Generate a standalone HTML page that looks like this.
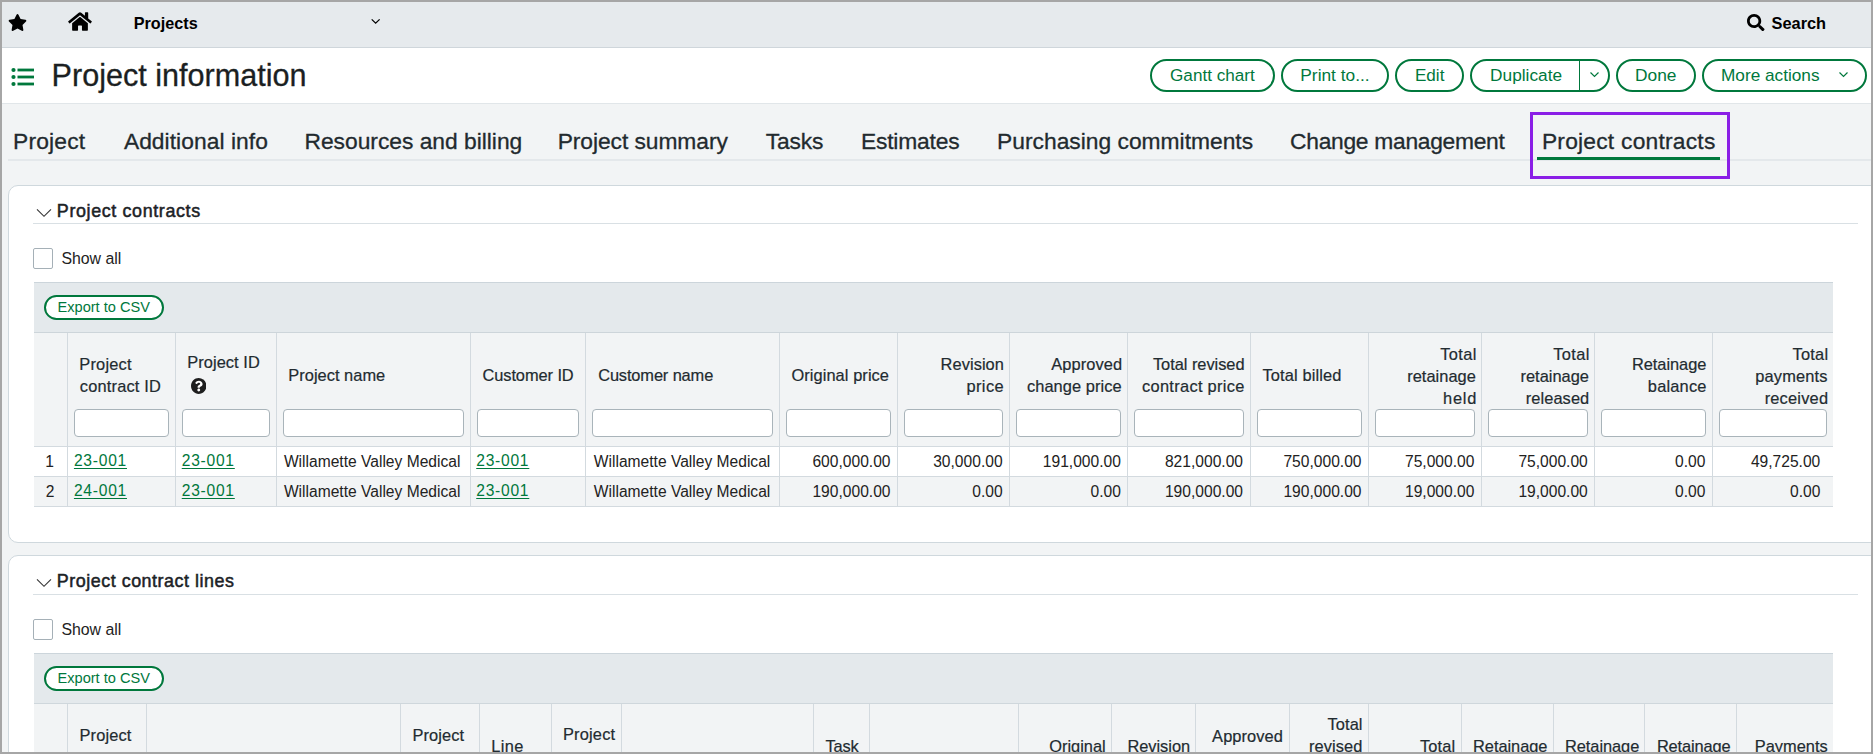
<!DOCTYPE html><html><head><meta charset="utf-8"><title>Project information</title><style>
*{box-sizing:border-box;margin:0;padding:0}
html,body{width:1873px;height:754px;overflow:hidden;background:#f2f4f5}
body{position:relative;font-family:"Liberation Sans",sans-serif;color:#222b30}
.abs{position:absolute}
.t{position:absolute;white-space:nowrap;line-height:1}
.btn{position:absolute;border:2px solid #00783c;border-radius:17px;background:#fff}
.inp{position:absolute;height:28px;background:#fff;border:1px solid #a9b4ba;border-radius:4px}
.vl{position:absolute;width:1px;background:#d3dadf}
.hl{position:absolute;height:1px;background:#d3dadf}
.hd{color:#222b30;-webkit-text-stroke:0.2px #222b30}
.cell{color:#222}
.lnk{color:#00783c;text-decoration:underline;text-underline-offset:1.5px;text-decoration-thickness:1px}
</style></head><body>
<div class="abs" style="left:0;top:0;width:1873px;height:48px;background:#e6eaed;border-bottom:1px solid #cfd6db"></div>
<svg class="abs" style="left:8px;top:14px" width="19" height="17" viewBox="0 0 576 512"><path fill="#000" d="M259.3 17.8L194 150.2 47.9 171.5c-26.2 3.8-36.7 36.1-17.7 54.6l105.7 103-25 145.5c-4.5 26.3 23.2 46 46.4 33.7L288 439.6l130.7 68.7c23.2 12.2 50.9-7.4 46.4-33.7l-25-145.5 105.7-103c19-18.5 8.5-50.8-17.7-54.6L382 150.2 316.7 17.8c-11.7-23.6-45.6-23.9-57.4 0z"/></svg>
<svg class="abs" style="left:68px;top:11px" width="24" height="21" viewBox="0 0 576 512"><path fill="#000" d="M280.37 148.26L96 300.11V464a16 16 0 0 0 16 16l112.06-.29a16 16 0 0 0 15.92-16V368a16 16 0 0 1 16-16h64a16 16 0 0 1 16 16v95.64a16 16 0 0 0 16 16.05L464 480a16 16 0 0 0 16-16V300L295.67 148.26a12.19 12.19 0 0 0-15.3 0zM571.6 251.47L488 182.56V44.05a12 12 0 0 0-12-12h-56a12 12 0 0 0-12 12v72.61L318.47 43a48 48 0 0 0-61 0L4.34 251.47a12 12 0 0 0-1.6 16.9l25.5 31A12 12 0 0 0 45.15 301l235.22-193.74a12.19 12.19 0 0 1 15.3 0L530.9 301a12 12 0 0 0 16.9-1.6l25.5-31a12 12 0 0 0-1.7-16.93z"/></svg>
<div class="t " style="left:133.75px;top:15.00px;font-size:16.20px;font-weight:bold;color:#000;">Projects</div>
<svg class="abs" style="left:370px;top:17px" width="12" height="8" viewBox="0 0 12 8"><path d="M1.7 2.4 L5.65 6.1 L9.6 2.4" fill="none" stroke="#000" stroke-width="1.3"/></svg>
<svg class="abs" style="left:1747px;top:14px" width="17.5" height="17.2" viewBox="0 0 512 512" preserveAspectRatio="none"><path fill="#000" d="M505 442.7L405.3 343c-4.5-4.5-10.6-7-17-7H372c27.6-35.3 44-79.7 44-128C416 93.1 322.9 0 208 0S0 93.1 0 208s93.1 208 208 208c48.3 0 92.7-16.4 128-44v16.3c0 6.4 2.5 12.5 7 17l99.7 99.7c9.4 9.4 24.6 9.4 33.9 0l28.3-28.3c9.4-9.4 9.4-24.6.1-34zM208 336c-70.7 0-128-57.2-128-128 0-70.7 57.2-128 128-128 70.7 0 128 57.2 128 128 0 70.7-57.2 128-128 128z"/></svg>
<div class="t " style="left:1771.51px;top:15.00px;font-size:16.39px;font-weight:bold;color:#000;">Search</div>
<div class="abs" style="left:0;top:48px;width:1873px;height:56px;background:#fff;border-bottom:1px solid #e1e6e9"></div>
<svg class="abs" style="left:11px;top:67px" width="24" height="20" viewBox="0 0 24 20"><circle cx="2.5" cy="3" r="2.1" fill="#00783c"/><circle cx="2.5" cy="10" r="2.1" fill="#00783c"/><circle cx="2.5" cy="17" r="2.1" fill="#00783c"/><rect x="6.5" y="1.6" width="16.5" height="2.8" fill="#00783c"/><rect x="6.5" y="8.6" width="16.5" height="2.8" fill="#00783c"/><rect x="6.5" y="15.6" width="16.5" height="2.8" fill="#00783c"/></svg>
<div class="t " style="left:51.55px;top:60.00px;font-size:30.59px;color:#1b1f22;-webkit-text-stroke:0.3px #1b1f22;">Project information</div>
<div class="btn" style="left:1150px;top:59px;width:125px;height:33px"></div>
<div class="t " style="left:1170.04px;top:67.00px;font-size:17.14px;color:#00783c;">Gantt chart</div>
<div class="btn" style="left:1281px;top:59px;width:108px;height:33px"></div>
<div class="t " style="left:1300.31px;top:67.00px;font-size:17.34px;color:#00783c;">Print to...</div>
<div class="btn" style="left:1395px;top:59px;width:69px;height:33px"></div>
<div class="t " style="left:1414.93px;top:67.00px;font-size:17.13px;color:#00783c;">Edit</div>
<div class="btn" style="left:1470px;top:59px;width:140px;height:33px"></div>
<div class="t " style="left:1490.12px;top:67.00px;font-size:17.28px;color:#00783c;">Duplicate</div>
<div class="btn" style="left:1616px;top:59px;width:80px;height:33px"></div>
<div class="t " style="left:1635.01px;top:67.00px;font-size:17.35px;color:#00783c;">Done</div>
<div class="btn" style="left:1702px;top:59px;width:165px;height:33px"></div>
<div class="t " style="left:1721.02px;top:67.00px;font-size:17.22px;color:#00783c;">More actions</div>
<div class="abs" style="left:1579px;top:59px;width:1.2px;height:33px;background:#00783c"></div>
<svg class="abs" style="left:1589px;top:70px" width="11" height="10" viewBox="0 0 11 10"><path d="M1.5 2.5 L5.5 6.5 L9.5 2.5" fill="none" stroke="#00783c" stroke-width="1.15"/></svg>
<svg class="abs" style="left:1837.5px;top:70px" width="11" height="10" viewBox="0 0 11 10"><path d="M1.5 2.5 L5.5 6.5 L9.5 2.5" fill="none" stroke="#00783c" stroke-width="1.15"/></svg>
<div class="abs" style="left:8px;top:159px;width:1865px;height:2px;background:#e4e8eb"></div>
<div class="t " style="left:13.08px;top:130.00px;font-size:22.80px;color:#222a2e;-webkit-text-stroke:0.3px #222a2e;letter-spacing:0.188px;">Project</div>
<div class="t " style="left:123.89px;top:130.00px;font-size:22.80px;color:#222a2e;-webkit-text-stroke:0.3px #222a2e;letter-spacing:0.053px;">Additional info</div>
<div class="t " style="left:304.48px;top:130.00px;font-size:22.80px;color:#222a2e;-webkit-text-stroke:0.3px #222a2e;letter-spacing:-0.008px;">Resources and billing</div>
<div class="t " style="left:557.68px;top:130.00px;font-size:22.80px;color:#222a2e;-webkit-text-stroke:0.3px #222a2e;letter-spacing:-0.062px;">Project summary</div>
<div class="t " style="left:765.83px;top:130.00px;font-size:22.80px;color:#222a2e;-webkit-text-stroke:0.3px #222a2e;letter-spacing:-0.146px;">Tasks</div>
<div class="t " style="left:860.88px;top:130.00px;font-size:22.80px;color:#222a2e;-webkit-text-stroke:0.3px #222a2e;letter-spacing:-0.159px;">Estimates</div>
<div class="t " style="left:997.08px;top:130.00px;font-size:22.80px;color:#222a2e;-webkit-text-stroke:0.3px #222a2e;letter-spacing:0.004px;">Purchasing commitments</div>
<div class="t " style="left:1290.06px;top:130.00px;font-size:22.80px;color:#222a2e;-webkit-text-stroke:0.3px #222a2e;letter-spacing:-0.279px;">Change management</div>
<div class="t " style="left:1541.88px;top:130.00px;font-size:22.80px;color:#222a2e;-webkit-text-stroke:0.3px #222a2e;letter-spacing:0.230px;">Project contracts</div>
<div class="abs" style="left:1537px;top:157px;width:183px;height:3px;background:#00783c"></div>
<div class="abs" style="left:1530px;top:112px;width:200px;height:67px;border:3px solid #8a1ee6"></div>
<div class="abs" style="left:8px;top:185px;width:1880px;height:358px;background:#fff;border:1px solid #cfd8dd;border-radius:10px"></div>
<svg class="abs" style="left:36px;top:208px" width="16" height="10" viewBox="0 0 16 10"><path d="M1 1.3 L8 8.3 L15 1.3" fill="none" stroke="#383838" stroke-width="1.15"/></svg>
<div class="t " style="left:56.87px;top:203.00px;font-size:17.90px;color:#1c2226;-webkit-text-stroke:0.5px #1c2226;letter-spacing:0.625px;">Project contracts</div>
<div class="abs" style="left:33px;top:223px;width:1825px;height:1px;background:#d9e0e4"></div>
<div class="abs" style="left:33px;top:248px;width:20px;height:21px;border:1px solid #a5b0b7;border-radius:2px;background:#fff"></div>
<div class="t " style="left:61.39px;top:251.00px;font-size:15.89px;color:#222;">Show all</div>
<div class="abs" style="left:34px;top:282px;width:1799px;height:51px;background:#e4e9ec;border-top:1px solid #ccd5db;border-bottom:1px solid #cdd5da"></div>
<div class="abs" style="left:44px;top:295px;width:120px;height:25px;border:2px solid #00783c;border-radius:13px;background:#fff"></div>
<div class="t " style="left:57.53px;top:300.00px;font-size:14.58px;color:#00783c;">Export to CSV</div>
<div class="abs" style="left:34px;top:333px;width:1799px;height:113px;background:#f2f4f5"></div>
<div class="abs" style="left:34px;top:477px;width:1799px;height:29px;background:#f2f4f5"></div>
<div class="hl" style="left:34px;top:446px;width:1799px"></div>
<div class="hl" style="left:34px;top:476px;width:1799px"></div>
<div class="hl" style="left:34px;top:506px;width:1799px"></div>
<div class="vl" style="left:67px;top:333px;height:173px"></div>
<div class="vl" style="left:175px;top:333px;height:173px"></div>
<div class="vl" style="left:276px;top:333px;height:173px"></div>
<div class="vl" style="left:470px;top:333px;height:173px"></div>
<div class="vl" style="left:585px;top:333px;height:173px"></div>
<div class="vl" style="left:779px;top:333px;height:173px"></div>
<div class="vl" style="left:897px;top:333px;height:173px"></div>
<div class="vl" style="left:1009px;top:333px;height:173px"></div>
<div class="vl" style="left:1127px;top:333px;height:173px"></div>
<div class="vl" style="left:1250px;top:333px;height:173px"></div>
<div class="vl" style="left:1368px;top:333px;height:173px"></div>
<div class="vl" style="left:1481px;top:333px;height:173px"></div>
<div class="vl" style="left:1594px;top:333px;height:173px"></div>
<div class="vl" style="left:1712px;top:333px;height:173px"></div>
<div class="inp" style="left:74px;top:409px;width:95px"></div>
<div class="inp" style="left:182px;top:409px;width:88px"></div>
<div class="inp" style="left:283px;top:409px;width:181px"></div>
<div class="inp" style="left:477px;top:409px;width:102px"></div>
<div class="inp" style="left:592px;top:409px;width:181px"></div>
<div class="inp" style="left:786px;top:409px;width:105px"></div>
<div class="inp" style="left:904px;top:409px;width:99px"></div>
<div class="inp" style="left:1016px;top:409px;width:105px"></div>
<div class="inp" style="left:1134px;top:409px;width:110px"></div>
<div class="inp" style="left:1257px;top:409px;width:105px"></div>
<div class="inp" style="left:1375px;top:409px;width:100px"></div>
<div class="inp" style="left:1488px;top:409px;width:100px"></div>
<div class="inp" style="left:1601px;top:409px;width:105px"></div>
<div class="inp" style="left:1719px;top:409px;width:108px"></div>
<div class="t hd" style="left:79.29px;top:356.00px;font-size:16.40px;letter-spacing:0.198px;">Project</div>
<div class="t hd" style="left:79.86px;top:378.00px;font-size:16.40px;letter-spacing:0.178px;">contract ID</div>
<div class="t hd" style="left:187.29px;top:354.00px;font-size:16.40px;letter-spacing:0.062px;">Project ID</div>
<div class="t hd" style="left:288.29px;top:367.00px;font-size:16.40px;letter-spacing:0.032px;">Project name</div>
<div class="t hd" style="left:482.48px;top:367.00px;font-size:16.40px;letter-spacing:-0.075px;">Customer ID</div>
<div class="t hd" style="left:598.18px;top:367.00px;font-size:16.40px;letter-spacing:-0.127px;">Customer name</div>
<div class="t hd" style="left:791.46px;top:367.00px;font-size:16.40px;letter-spacing:0.075px;">Original price</div>
<div class="t hd" style="left:940.59px;top:356.00px;font-size:16.40px;letter-spacing:0.069px;">Revision</div>
<div class="t hd" style="left:966.43px;top:378.00px;font-size:16.40px;letter-spacing:0.424px;">price</div>
<div class="t hd" style="left:1051.22px;top:356.00px;font-size:16.40px;letter-spacing:0.094px;">Approved</div>
<div class="t hd" style="left:1026.96px;top:378.00px;font-size:16.40px;letter-spacing:0.081px;">change price</div>
<div class="t hd" style="left:1152.89px;top:356.00px;font-size:16.40px;letter-spacing:-0.026px;">Total revised</div>
<div class="t hd" style="left:1142.06px;top:378.00px;font-size:16.40px;letter-spacing:0.298px;">contract price</div>
<div class="t hd" style="left:1262.49px;top:367.00px;font-size:16.40px;letter-spacing:0.126px;">Total billed</div>
<div class="t hd" style="left:1440.29px;top:346.00px;font-size:16.40px;letter-spacing:0.343px;">Total</div>
<div class="t hd" style="left:1407.23px;top:368.00px;font-size:16.40px;letter-spacing:0.040px;">retainage</div>
<div class="t hd" style="left:1443.05px;top:390.00px;font-size:16.40px;letter-spacing:0.739px;">held</div>
<div class="t hd" style="left:1553.29px;top:346.00px;font-size:16.40px;letter-spacing:0.343px;">Total</div>
<div class="t hd" style="left:1520.53px;top:368.00px;font-size:16.40px;letter-spacing:0.002px;">retainage</div>
<div class="t hd" style="left:1525.73px;top:390.00px;font-size:16.40px;letter-spacing:0.091px;">released</div>
<div class="t hd" style="left:1631.89px;top:356.00px;font-size:16.40px;letter-spacing:-0.029px;">Retainage</div>
<div class="t hd" style="left:1647.83px;top:378.00px;font-size:16.40px;letter-spacing:0.201px;">balance</div>
<div class="t hd" style="left:1792.49px;top:346.00px;font-size:16.40px;letter-spacing:0.243px;">Total</div>
<div class="t hd" style="left:1755.23px;top:368.00px;font-size:16.40px;letter-spacing:0.178px;">payments</div>
<div class="t hd" style="left:1764.63px;top:390.00px;font-size:16.40px;letter-spacing:0.206px;">received</div>
<svg class="abs" style="left:190.8px;top:378px" width="15.5" height="15.9" viewBox="8 8 496 496" preserveAspectRatio="none"><path fill="#1e1e1e" d="M504 256c0 136.997-111.043 248-248 248S8 392.997 8 256C8 119.083 119.043 8 256 8s248 111.083 248 248z"/><path fill="#fff" d="M262.655 90c-54.497 0-89.255 22.957-116.549 63.758-3.536 5.286-2.353 12.415 2.715 16.258l34.699 26.31c5.205 3.947 12.621 3.008 16.665-2.122 17.864-22.658 30.113-35.797 57.303-35.797 20.429 0 45.698 13.148 45.698 32.958 0 14.976-12.363 22.667-32.534 33.976C247.128 238.528 216 254.941 216 296v4c0 6.627 5.373 12 12 12h56c6.627 0 12-5.373 12-12v-1.333c0-28.462 83.186-29.647 83.186-106.667 0-58.002-60.165-102-116.531-102zM256 338c-25.365 0-46 20.635-46 46 0 25.364 20.635 46 46 46s46-20.636 46-46c0-25.365-20.635-46-46-46z"/></svg>
<div class="t cell" style="left:45.33px;top:454.00px;font-size:15.60px;">1</div>
<div class="t cell lnk" style="left:73.92px;top:453.00px;font-size:15.60px;letter-spacing:0.753px;">23-001</div>
<div class="t cell lnk" style="left:181.72px;top:453.00px;font-size:15.60px;letter-spacing:0.753px;">23-001</div>
<div class="t cell" style="left:283.92px;top:454.00px;font-size:15.60px;">Willamette Valley Medical</div>
<div class="t cell lnk" style="left:476.22px;top:453.00px;font-size:15.60px;letter-spacing:0.753px;">23-001</div>
<div class="t cell" style="left:593.82px;top:454.00px;font-size:15.60px;">Willamette Valley Medical</div>
<div class="t cell" style="left:812.45px;top:454.00px;font-size:15.60px;">600,000.00</div>
<div class="t cell" style="left:933.20px;top:454.00px;font-size:15.60px;">30,000.00</div>
<div class="t cell" style="left:1042.85px;top:454.00px;font-size:15.60px;">191,000.00</div>
<div class="t cell" style="left:1164.95px;top:454.00px;font-size:15.60px;">821,000.00</div>
<div class="t cell" style="left:1283.45px;top:454.00px;font-size:15.60px;">750,000.00</div>
<div class="t cell" style="left:1405.00px;top:454.00px;font-size:15.60px;">75,000.00</div>
<div class="t cell" style="left:1518.40px;top:454.00px;font-size:15.60px;">75,000.00</div>
<div class="t cell" style="left:1674.98px;top:454.00px;font-size:15.60px;">0.00</div>
<div class="t cell" style="left:1750.90px;top:454.00px;font-size:15.60px;">49,725.00</div>
<div class="t cell" style="left:45.72px;top:484.00px;font-size:15.60px;">2</div>
<div class="t cell lnk" style="left:73.92px;top:483.00px;font-size:15.60px;letter-spacing:0.753px;">24-001</div>
<div class="t cell lnk" style="left:181.72px;top:483.00px;font-size:15.60px;letter-spacing:0.753px;">23-001</div>
<div class="t cell" style="left:283.92px;top:484.00px;font-size:15.60px;">Willamette Valley Medical</div>
<div class="t cell lnk" style="left:476.22px;top:483.00px;font-size:15.60px;letter-spacing:0.753px;">23-001</div>
<div class="t cell" style="left:593.82px;top:484.00px;font-size:15.60px;">Willamette Valley Medical</div>
<div class="t cell" style="left:812.45px;top:484.00px;font-size:15.60px;">190,000.00</div>
<div class="t cell" style="left:972.28px;top:484.00px;font-size:15.60px;">0.00</div>
<div class="t cell" style="left:1090.58px;top:484.00px;font-size:15.60px;">0.00</div>
<div class="t cell" style="left:1164.95px;top:484.00px;font-size:15.60px;">190,000.00</div>
<div class="t cell" style="left:1283.45px;top:484.00px;font-size:15.60px;">190,000.00</div>
<div class="t cell" style="left:1405.00px;top:484.00px;font-size:15.60px;">19,000.00</div>
<div class="t cell" style="left:1518.40px;top:484.00px;font-size:15.60px;">19,000.00</div>
<div class="t cell" style="left:1674.98px;top:484.00px;font-size:15.60px;">0.00</div>
<div class="t cell" style="left:1789.98px;top:484.00px;font-size:15.60px;">0.00</div>
<div class="abs" style="left:8px;top:555px;width:1880px;height:400px;background:#fff;border:1px solid #cfd8dd;border-radius:10px"></div>
<svg class="abs" style="left:36px;top:578px" width="16" height="10" viewBox="0 0 16 10"><path d="M1 1.3 L8 8.3 L15 1.3" fill="none" stroke="#383838" stroke-width="1.15"/></svg>
<div class="t " style="left:56.87px;top:573.00px;font-size:17.90px;color:#1c2226;-webkit-text-stroke:0.5px #1c2226;letter-spacing:0.521px;">Project contract lines</div>
<div class="abs" style="left:33px;top:594px;width:1825px;height:1px;background:#d9e0e4"></div>
<div class="abs" style="left:33px;top:619px;width:20px;height:21px;border:1px solid #a5b0b7;border-radius:2px;background:#fff"></div>
<div class="t " style="left:61.39px;top:622.00px;font-size:15.89px;color:#222;">Show all</div>
<div class="abs" style="left:34px;top:653px;width:1799px;height:51px;background:#e4e9ec;border-top:1px solid #ccd5db;border-bottom:1px solid #cdd5da"></div>
<div class="abs" style="left:44px;top:666px;width:120px;height:25px;border:2px solid #00783c;border-radius:13px;background:#fff"></div>
<div class="t " style="left:57.53px;top:671.00px;font-size:14.58px;color:#00783c;">Export to CSV</div>
<div class="abs" style="left:34px;top:704px;width:1799px;height:60px;background:#f2f4f5"></div>
<div class="hl" style="left:34px;top:703px;width:1799px;background:#cfd7dc"></div>
<div class="vl" style="left:67px;top:704px;height:60px"></div>
<div class="vl" style="left:146px;top:704px;height:60px"></div>
<div class="vl" style="left:400px;top:704px;height:60px"></div>
<div class="vl" style="left:479px;top:704px;height:60px"></div>
<div class="vl" style="left:551px;top:704px;height:60px"></div>
<div class="vl" style="left:621px;top:704px;height:60px"></div>
<div class="vl" style="left:813px;top:704px;height:60px"></div>
<div class="vl" style="left:869px;top:704px;height:60px"></div>
<div class="vl" style="left:1018px;top:704px;height:60px"></div>
<div class="vl" style="left:1111px;top:704px;height:60px"></div>
<div class="vl" style="left:1195px;top:704px;height:60px"></div>
<div class="vl" style="left:1289px;top:704px;height:60px"></div>
<div class="vl" style="left:1368px;top:704px;height:60px"></div>
<div class="vl" style="left:1461px;top:704px;height:60px"></div>
<div class="vl" style="left:1553px;top:704px;height:60px"></div>
<div class="vl" style="left:1644px;top:704px;height:60px"></div>
<div class="vl" style="left:1736px;top:704px;height:60px"></div>
<div class="t hd" style="left:79.49px;top:727.00px;font-size:16.40px;letter-spacing:0.148px;">Project</div>
<div class="t hd" style="left:412.39px;top:727.00px;font-size:16.40px;letter-spacing:0.115px;">Project</div>
<div class="t hd" style="left:491.19px;top:738.00px;font-size:16.40px;letter-spacing:0.385px;">Line</div>
<div class="t hd" style="left:562.99px;top:726.00px;font-size:16.40px;letter-spacing:0.182px;">Project</div>
<div class="t hd" style="left:825.59px;top:738.00px;font-size:16.40px;letter-spacing:-0.231px;">Task</div>
<div class="t hd" style="left:1049.26px;top:738.00px;font-size:16.40px;letter-spacing:-0.013px;">Original</div>
<div class="t hd" style="left:1127.39px;top:738.00px;font-size:16.40px;letter-spacing:-0.017px;">Revision</div>
<div class="t hd" style="left:1212.12px;top:728.00px;font-size:16.40px;letter-spacing:0.094px;">Approved</div>
<div class="t hd" style="left:1327.59px;top:716.00px;font-size:16.40px;letter-spacing:0.068px;">Total</div>
<div class="t hd" style="left:1309.03px;top:738.00px;font-size:16.40px;letter-spacing:0.090px;">revised</div>
<div class="t hd" style="left:1419.89px;top:738.00px;font-size:16.40px;letter-spacing:0.168px;">Total</div>
<div class="t hd" style="left:1473.09px;top:738.00px;font-size:16.40px;letter-spacing:-0.054px;">Retainage</div>
<div class="t hd" style="left:1564.99px;top:738.00px;font-size:16.40px;letter-spacing:-0.054px;">Retainage</div>
<div class="t hd" style="left:1656.89px;top:738.00px;font-size:16.40px;letter-spacing:-0.117px;">Retainage</div>
<div class="t hd" style="left:1754.69px;top:738.00px;font-size:16.40px;letter-spacing:0.013px;">Payments</div>
<div class="abs" style="left:0;top:0;width:1873px;height:754px;border:2px solid #a6a6a6;pointer-events:none"></div>
</body></html>
